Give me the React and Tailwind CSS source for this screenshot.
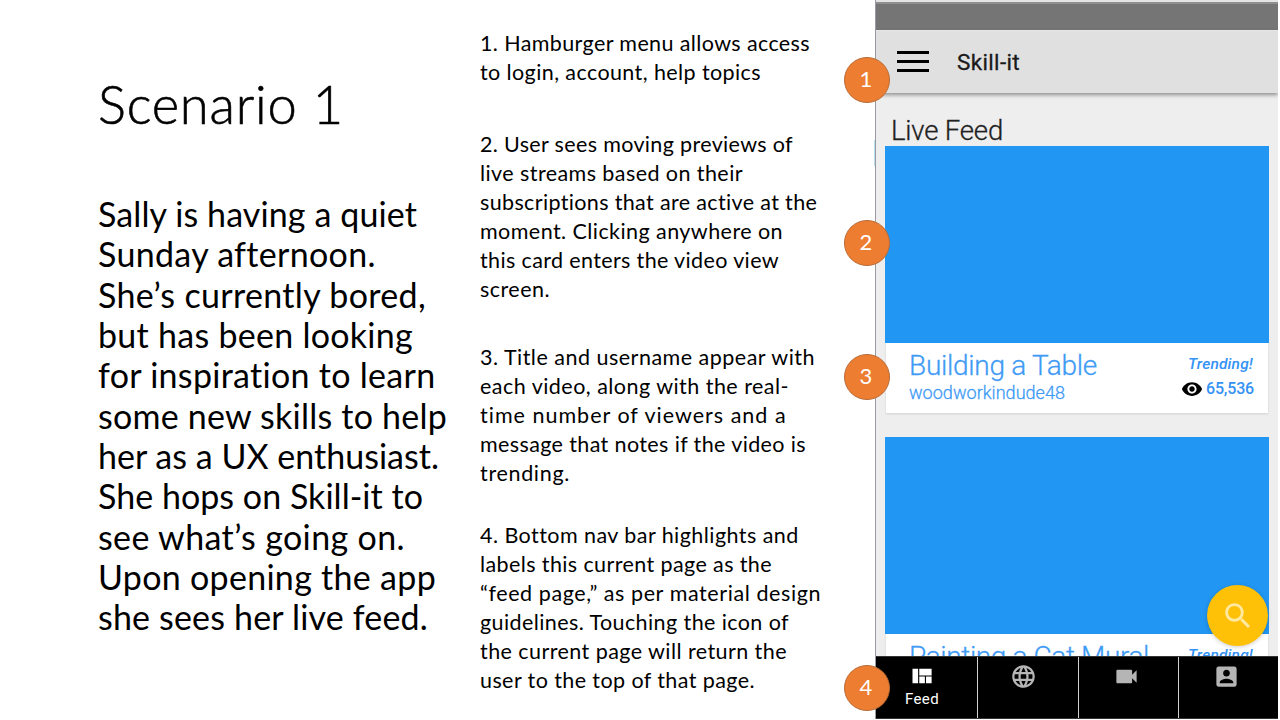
import { useLayoutEffect, useRef, useState } from "react";

// A single line of text whose letters are spaced to reach the given width.
function Line({ w, children }) {
  const ref = useRef(null);
  const [spacing, setSpacing] = useState(0);
  useLayoutEffect(() => {
    const natural = ref.current.getBoundingClientRect().width;
    setSpacing((w - natural) / children.length);
  }, [w, children]);
  return (
    <span className="block whitespace-nowrap">
      <span ref={ref} style={{ letterSpacing: `${spacing}px` }}>{children}</span>
    </span>
  );
}

const story = [
  ["Sally is having a quiet", 319], ["Sunday afternoon.", 277], ["She’s currently bored,", 328],
  ["but has been looking", 315], ["for inspiration to learn", 338], ["some new skills to help", 349],
  ["her as a UX enthusiast.", 341], ["She hops on Skill-it to", 325], ["see what’s going on.", 307],
  ["Upon opening the app", 338], ["she sees her live feed.", 330],
];

const notes = [
  { gap: "", lines: [["1. Hamburger menu allows access", 330], ["to login, account, help topics", 281]] },
  {
    gap: "mt-[43px]",
    lines: [["2. User sees moving previews of", 313], ["live streams based on their", 263], ["subscriptions that are active at the", 338],
      ["moment. Clicking anywhere on", 303], ["this card enters the video view", 299], ["screen.", 70]],
  },
  {
    gap: "mt-[39px]",
    lines: [["3. Title and username appear with", 335], ["each video, along with the real-", 309], ["time number of viewers and a", 307],
      ["message that notes if the video is", 326], ["trending.", 90]],
  },
  {
    gap: "mt-[33px]",
    lines: [["4. Bottom nav bar highlights and", 318], ["labels this current page as the", 292], ["“feed page,” as per material design", 341],
      ["guidelines. Touching the icon of", 309], ["the current page will return the", 307], ["user to the top of that page.", 275]],
  },
];

function Icon({ d, className }) {
  return <svg viewBox="0 0 24 24" fill="currentColor" className={className}><path d={d} /></svg>;
}

const EYE = "M12 4.5C7 4.5 2.73 7.61 1 12c1.73 4.39 6 7.5 11 7.5s9.27-3.11 11-7.5c-1.73-4.39-6-7.5-11-7.5zM12 17c-2.76 0-5-2.24-5-5s2.24-5 5-5 5 2.24 5 5-2.24 5-5 5zm0-8c-1.66 0-3 1.34-3 3s1.34 3 3 3 3-1.34 3-3-1.34-3-3-3z";
const QUILT = "M10 18h5v-6h-5v6zm-6 0h5V5H4v13zm12 0h5v-6h-5v6zM10 5v6h11V5H10z";
const GLOBE = "M11.99 2C6.47 2 2 6.48 2 12s4.47 10 9.99 10C17.52 22 22 17.52 22 12S17.52 2 11.99 2zm6.93 6h-2.95c-.32-1.25-.78-2.45-1.38-3.56 1.84.63 3.37 1.91 4.33 3.56zM12 4.04c.83 1.2 1.48 2.53 1.91 3.96h-3.82c.43-1.43 1.08-2.76 1.91-3.96zM4.26 14C4.1 13.36 4 12.69 4 12s.1-1.36.26-2h3.38c-.08.66-.14 1.32-.14 2 0 .68.06 1.34.14 2H4.26zm.82 2h2.95c.32 1.25.78 2.45 1.38 3.56-1.84-.63-3.37-1.9-4.33-3.56zm2.95-8H5.08c.96-1.66 2.49-2.93 4.33-3.56C8.81 5.55 8.35 6.75 8.03 8zM12 19.96c-.83-1.2-1.48-2.53-1.91-3.96h3.82c-.43 1.43-1.08 2.76-1.91 3.96zM14.34 14H9.66c-.09-.66-.16-1.32-.16-2 0-.68.07-1.35.16-2h4.68c.09.65.16 1.32.16 2 0 .68-.07 1.34-.16 2zm.25 5.56c.6-1.11 1.06-2.31 1.38-3.56h2.95c-.96 1.65-2.49 2.93-4.33 3.56zM16.36 14c.08-.66.14-1.32.14-2 0-.68-.06-1.34-.14-2h3.38c.16.64.26 1.31.26 2s-.1 1.36-.26 2h-3.38z";
const CAMERA = "M17 10.5V7c0-.55-.45-1-1-1H4c-.55 0-1 .45-1 1v10c0 .55.45 1 1 1h12c.55 0 1-.45 1-1v-3.5l4 4v-11l-4 4z";
const ACCOUNT = "M3 5v14c0 1.1.89 2 2 2h14c1.1 0 2-.9 2-2V5c0-1.1-.9-2-2-2H5c-1.11 0-2 .9-2 2zm12 4c0 1.66-1.34 3-3 3s-3-1.34-3-3 1.34-3 3-3 3 1.34 3 3zm-9 8c0-2 4-3.1 6-3.1s6 1.1 6 3.1v1H6v-1z";
const SEARCH = "M15.5 14h-.79l-.28-.27C15.41 12.59 16 11.11 16 9.5 16 5.91 13.09 3 9.5 3S3 5.91 3 9.5 5.91 16 9.5 16c1.61 0 3.09-.59 4.23-1.57l.27.28v.79l5 4.99L20.49 19l-4.99-5zm-6 0C7.01 14 5 11.99 5 9.5S7.01 5 9.5 5 14 7.01 14 9.5 11.99 14 9.5 14z";

function Card({ title, titleWidth, user, views }) {
  return (
    <article className="w-96 shrink-0">
      <div className="h-[197px] bg-[#2196f3]" />
      <div className="ml-px flex h-[70px] w-[382px] justify-between bg-white pl-[23px] pr-[14px] text-[#3f9bf5] shadow-[0_1px_2px_rgba(0,0,0,0.12)]">
        <div>
          <h3 className="mt-[7px] text-[28px] font-light leading-8 [-webkit-text-stroke:0.3px_#3f9bf5]"><Line w={titleWidth}>{title}</Line></h3>
          {user && <p className="text-[18px] font-light leading-[21px] [-webkit-text-stroke:0.3px_#3f9bf5]"><Line w={156}>{user}</Line></p>}
        </div>
        <div className="flex flex-col items-end text-[#3392f5]">
          <div className="mr-px mt-[11px] text-[15.5px] font-medium italic leading-5"><Line w={65}>Trending!</Line></div>
          {views && (
            <div className="mt-1 flex items-center gap-[3px] text-base font-medium leading-5">
              <Icon d={EYE} className="size-[22px] text-black" />
              <Line w={48}>{views}</Line>
            </div>
          )}
        </div>
      </div>
    </article>
  );
}

function Marker({ n, top }) {
  return (
    <div className={`absolute left-[844px] z-20 flex size-[46px] items-center justify-center rounded-full border border-[#b96a35] bg-[#ed7d31] pb-[2px] pr-[2px] text-[22px] leading-none text-white ${top}`}>
      {n}
    </div>
  );
}

const tabs = [
  { d: QUILT, label: "Feed", box: "w-[101px]", icon: "mt-[6px] mr-[11px] size-[27px] text-white" },
  { d: GLOBE, box: "w-[100px]", icon: "mt-[6px] mr-[9px] size-[27px]" },
  { d: CAMERA, box: "w-[99px]", icon: "mt-[6px] mr-1 size-[27px]" },
  { d: ACCOUNT, box: "w-[99px]", icon: "mt-[6px] mr-[5px] size-[27px]" },
];

function Phone() {
  return (
    <section className="flex h-[719px] w-[403px] flex-col overflow-hidden border-l-[1.5px] border-[#9a9ba0] bg-[#eeeeee] font-['Roboto',sans-serif]">
      <div className="h-[2px] shrink-0 bg-[#e4e4e4]" />
      <div className="h-[29px] shrink-0 border-b border-t-2 border-b-[#f0f0f0] border-t-[#8f8f8f] bg-[#757575]" />
      <header className="z-10 flex h-[62px] shrink-0 items-center bg-[#e0e0e0] pb-[2px] pl-[21px] shadow-[0_2px_4px_rgba(0,0,0,0.4)]">
        <div className="mr-7 flex w-8 flex-col gap-[6px]">
          <div className="h-[3px] bg-black" />
          <div className="h-[3px] bg-black" />
          <div className="h-[3px] bg-black" />
        </div>
        <h2 className="mt-[2px] text-[22.5px] leading-7 text-[#1a1a1a] [-webkit-text-stroke:0.3px_#1a1a1a]"><Line w={63}>Skill-it</Line></h2>
      </header>
      <main className="flex min-h-0 flex-1 flex-col overflow-hidden pl-[9px]">
        <h2 className="ml-[6px] mt-[22px] h-[31px] shrink-0 text-[27.5px] font-light leading-8 text-[#212121] [-webkit-text-stroke:0.3px_#212121]"><Line w={112}>Live Feed</Line></h2>
        <Card title="Building a Table" titleWidth={188} user="woodworkindude48" views="65,536" />
        <div className="h-[24px] shrink-0" />
        <Card title="Painting a Cat Mural" titleWidth={240} />
      </main>
      <nav className="flex h-[63px] shrink-0 gap-px border-y border-[#333] bg-[#d0d0d0]">
        {tabs.map((t, i) => (
          <div key={i} className={`flex shrink-0 flex-col items-center bg-black text-[#b5b5b5] ${t.box}`}>
            <Icon d={t.d} className={t.icon} />
            {t.label && <div className="mr-[9px] text-[15px] leading-[18px] text-white"><Line w={34}>{t.label}</Line></div>}
          </div>
        ))}
      </nav>
    </section>
  );
}

export default function App() {
  return (
    <div className="relative flex h-[720px] w-[1280px] overflow-hidden bg-white font-['Lato',sans-serif] text-black">
      <section className="ml-[98px] w-[382px] pt-[72px]">
        <h1 className="text-[52.5px] font-light leading-[64px] [-webkit-text-stroke:0.6px_black]"><Line w={246}>Scenario 1</Line></h1>
        <p className="mt-[58px] text-[34px] leading-[40.35px]">
          {story.map(([text, w]) => <Line key={text} w={w}>{text}</Line>)}
        </p>
      </section>
      <section className="w-[395px] pt-[29px] text-[21.5px] leading-[29px]">
        {notes.map((note, i) => (
          <p key={i} className={note.gap}>
            {note.lines.map(([text, w]) => <Line key={text} w={w}>{text}</Line>)}
          </p>
        ))}
      </section>
      <Phone />
      <div className="absolute left-[874px] top-[140px] h-[26px] w-px bg-[#b9ddf3]" />
      <div className="absolute left-[1207px] top-[585px] flex size-[61px] items-center justify-center rounded-full bg-[#ffc107] text-[#ffe9a0] shadow-[0_1px_4px_rgba(0,0,0,0.2)]">
        <Icon d={SEARCH} className="size-[34px]" />
      </div>
      <Marker n="1" top="top-[57px]" />
      <Marker n="2" top="top-[220px]" />
      <Marker n="3" top="top-[354px]" />
      <Marker n="4" top="top-[665px]" />
    </div>
  );
}
